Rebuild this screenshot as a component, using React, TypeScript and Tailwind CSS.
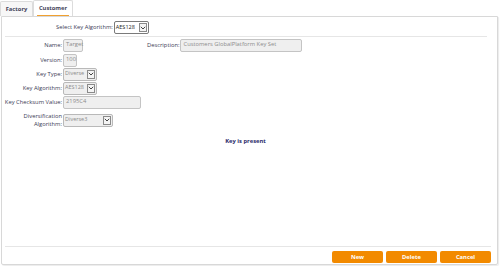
import React from "react";

const font = { fontFamily: '"Open Sans", "Liberation Sans", sans-serif' };

function Chevron() {
  return (
    <span className="flex h-[9px] w-[8px] shrink-0 items-center justify-center border border-[#8a8a8a] bg-[#f4f4f4]">
      <svg width="6" height="4" viewBox="0 0 6 4">
        <path d="M0.8 0.8 L3 3 L5.2 0.8" stroke="#444" strokeWidth="1" fill="none" />
      </svg>
    </span>
  );
}

function Select({ value, w, disabled = true }: { value: string; w: string; disabled?: boolean }) {
  return (
    <div
      className={`flex h-[13px] items-center justify-between gap-[1px] rounded-[2px] border pl-[1px] pr-[1px] ${w} ${
        disabled ? "border-[#b9b9b9] bg-[#efefef] text-[#8c8c8c]" : "border-[#7a7a7a] bg-white text-[#222]"
      }`}
    >
      <span className="whitespace-nowrap text-[5.5px] leading-none">{value}</span>
      <Chevron />
    </div>
  );
}

function Input({ value, w }: { value: string; w: string }) {
  return (
    <div className={`flex h-[13px] items-center rounded-[2px] border border-[#c4c4c4] bg-[#efefef] px-[2px] text-[#8c8c8c] ${w}`}>
      <span className="whitespace-nowrap leading-none">{value}</span>
    </div>
  );
}

function Label({ children }: { children: React.ReactNode }) {
  return <div className="w-[60px] whitespace-nowrap text-right leading-[8px] text-[#3a3a55]">{children}</div>;
}

export default function App() {
  return (
    <div className="relative h-[266px] w-[500px] bg-white text-[5.8px]" style={font}>
      {/* tabs */}
      <div className="flex h-[16px] items-end">
        <div className="flex h-[15px] w-[33px] items-center justify-center rounded-t-[2px] border border-b-0 border-[#dcdcdc] bg-[#f7f7f7] font-bold text-[#44445a]">
          Factory
        </div>
        <div className="relative flex h-[16px] w-[40px] items-center justify-center rounded-t-[2px] border border-b-0 border-[#dcdcdc] bg-white font-bold text-[#44445a]">
          <span className="relative pb-[1px]">
            Customer
            <span className="absolute bottom-[-3px] left-[-2px] right-[-2px] h-[1px] bg-[#f0a030]" />
          </span>
        </div>
      </div>

      {/* panel */}
      <div className="mx-[1px] flex h-[249px] w-[497px] flex-col rounded-b-[2px] border border-[#d8d8d8] shadow-[1px_1px_1px_rgba(0,0,0,0.08)]">
        <div className="flex h-[19px] items-center justify-start pl-[54px] pt-[2px]">
          <span className="mr-[1px] text-[#3a3a55]">Select Key Algorithm:</span>
          <Select value="AES128" w="w-[35px]" disabled={false} />
        </div>
        <div className="mx-[3px] mr-[10px] h-[1px] bg-[#e6e6e6]" />

        <div className="flex flex-col pt-[1px]">
          <div className="flex h-[14px] items-center gap-[1px]">
            <Label>Name:</Label>
            <Input value="Target" w="w-[20px]" />
            <div className="ml-[63px] flex items-center gap-[1px]">
              <span className="text-[#3a3a55]">Description:</span>
              <Input value="Customers GlobalPlatform Key Set" w="w-[122px]" />
            </div>
          </div>
          <div className="mt-[1px] flex h-[14px] items-center gap-[1px]">
            <Label>Version:</Label>
            <Input value="100" w="w-[14px]" />
          </div>
          <div className="flex h-[14px] items-center gap-[1px]">
            <Label>Key Type:</Label>
            <Select value="Diverse" w="w-[34px]" />
          </div>
          <div className="flex h-[14px] items-center gap-[1px]">
            <Label>Key Algorithm:</Label>
            <Select value="AES128" w="w-[34px]" />
          </div>
          <div className="flex h-[14px] items-center gap-[1px]">
            <Label>Key Checksum Value:</Label>
            <Input value="2195C4" w="w-[78px]" />
          </div>
          <div className="mt-[2px] flex h-[18px] items-center gap-[1px]">
            <Label>
              Diversification
              <br />
              Algorithm:
            </Label>
            <Select value="Diverse3" w="w-[50px]" />
          </div>
        </div>

        <div className="mt-[8px] flex justify-center pr-[8px] font-bold text-[#2b2b6a]">Key is present</div>

        <div className="flex-1" />
        <div className="mx-[3px] mr-[6px] h-[1px] bg-[#e6e6e6]" />
        <div className="flex h-[17px] items-end justify-end gap-[3px] pb-[1px] pr-[6px]">
          {["New", "Delete", "Cancel"].map((t) => (
            <button
              key={t}
              className="flex h-[12px] w-[51px] items-center justify-center rounded-[2px] bg-[#f28a00] font-bold text-white"
            >
              {t}
            </button>
          ))}
        </div>
      </div>
    </div>
  );
}
